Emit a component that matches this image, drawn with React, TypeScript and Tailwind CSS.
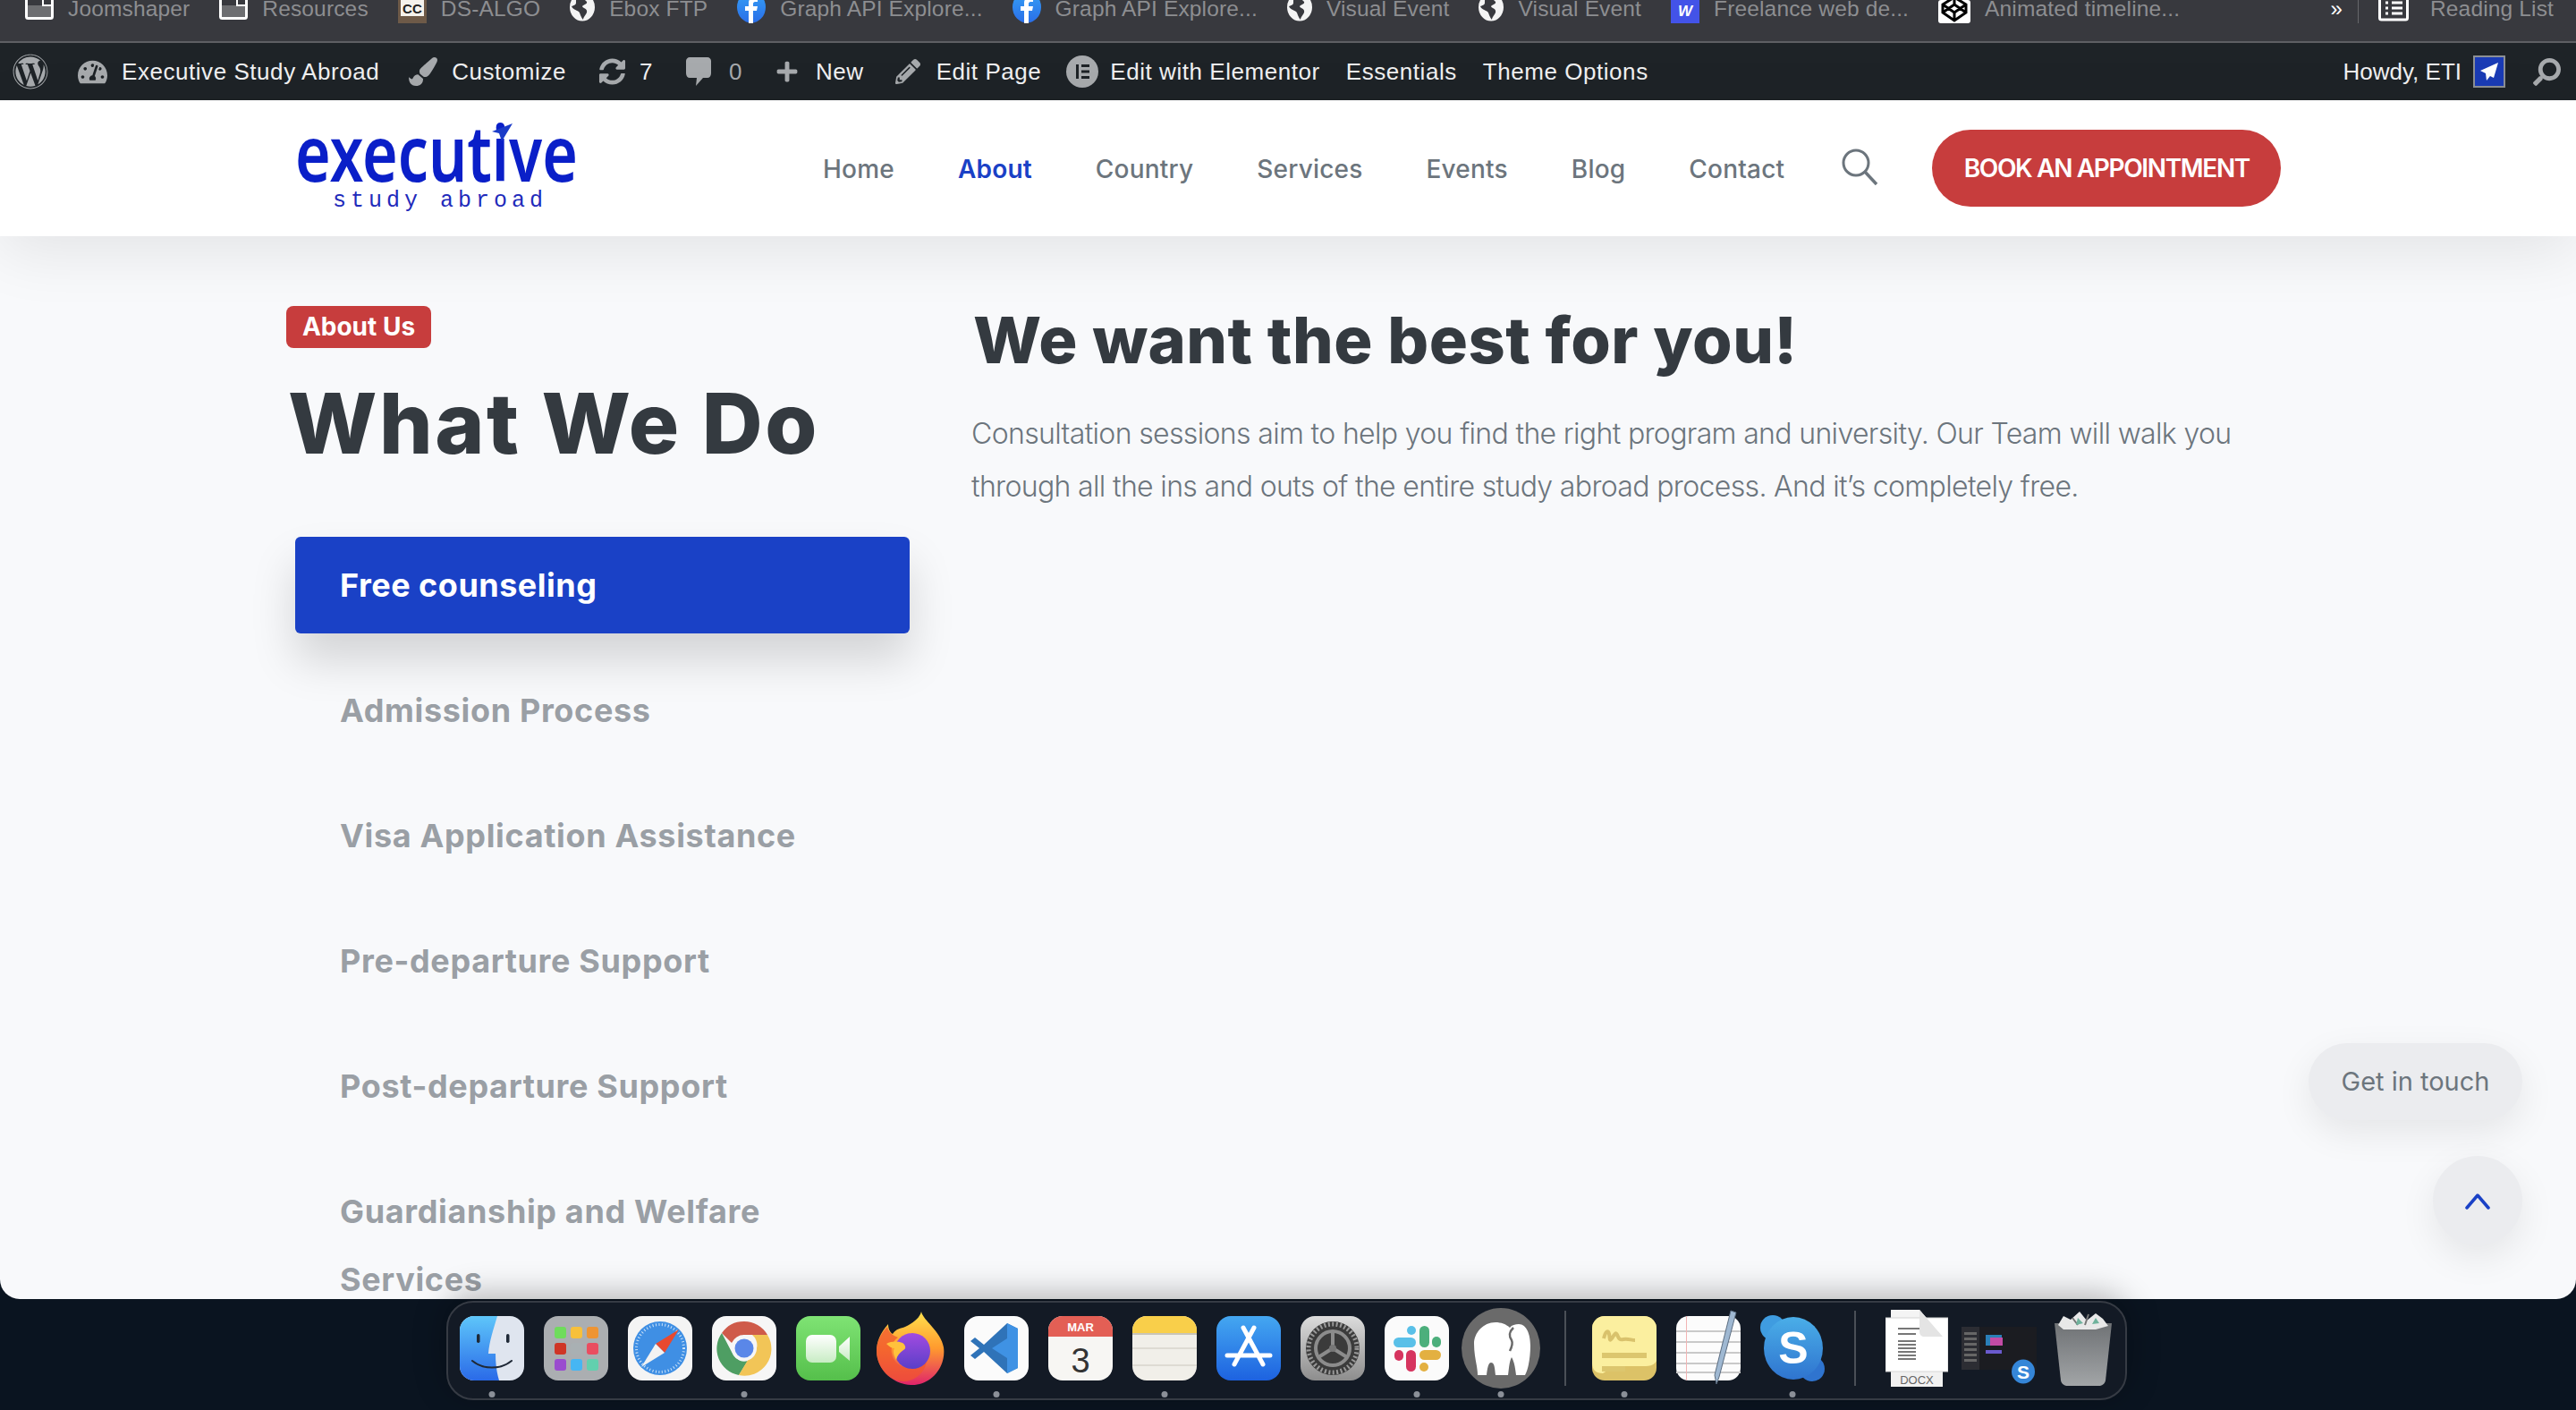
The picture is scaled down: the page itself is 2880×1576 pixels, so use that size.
import React from "react";
import { FaWordpress, FaSyncAlt, FaPlus, FaPencilAlt, FaTachometerAlt, FaSearch, FaPaintBrush } from "react-icons/fa";

const PageIcon = () => (
  <svg width="32" height="22" viewBox="0 0 32 22"><rect x="1.5" y="-10" width="29" height="30.5" rx="2" fill="#6d6e71" stroke="#fff" strokeWidth="3" /><rect x="3" y="0" width="26" height="6" fill="#38393e" /><path d="M20 0v6h10" fill="none" stroke="#fff" strokeWidth="2" /></svg>
);
const CcIcon = () => (
  <svg width="32" height="26" viewBox="0 0 32 26"><rect width="32" height="26" fill="#6e5a48" /><rect x="3" y="0" width="26" height="18" fill="#f5f2ec" /><text x="16" y="15" textAnchor="middle" fontSize="15" fontWeight="700" fontFamily="Liberation Sans" fill="#222">CC</text></svg>
);
const GlobeIcon = () => (
  <svg width="28" height="24" viewBox="0 0 28 24"><ellipse cx="14" cy="8" rx="14" ry="15.5" fill="#f4f4f4" /><path d="M8 -4c4 2 9 3 11 6 1 3-4 3-5 5 1 3 6 2 5 7-1 3-4 5-4 8-3-3-3-7-5-9-3-2-7-3-8-6 2-1 5-1 5-4 0-3 0-5 1-7z" fill="#38393e" /></svg>
);
const FbIcon = () => (
  <svg width="32" height="26" viewBox="0 0 32 26"><defs><linearGradient id="fbg" x1="0" y1="0" x2="0" y2="1"><stop offset="0" stopColor="#35a0f5" /><stop offset="1" stopColor="#2a6ee8" /></linearGradient></defs><ellipse cx="16" cy="8" rx="16" ry="17.5" fill="url(#fbg)" /><path d="M13 26V12H9V7h4V3c0-4 3-6 6-6h4v5h-3c-1 0-2 1-2 2v3h5l-1 5h-4v14z" fill="#fff" /></svg>
);
const WIcon = () => (
  <svg width="32" height="26" viewBox="0 0 32 26"><rect width="32" height="26" fill="#4353e8" /><text x="16" y="18" textAnchor="middle" fontSize="17" fontWeight="700" fontStyle="italic" fontFamily="Liberation Sans" fill="#fff">W</text></svg>
);
const PenIcon = () => (
  <svg width="36" height="26" viewBox="0 0 36 26"><rect width="36" height="26" rx="3" fill="#fff" /><path d="M18 -3 31 5v9l-13 9-13-9V5zM18 -3v8M18 14v9M5 5l13 9 13-9M5 14l13-9 13 9" fill="none" stroke="#000" strokeWidth="3" /></svg>
);
const ReadIcon = () => (
  <svg width="34" height="24" viewBox="0 0 34 24"><rect x="1.5" y="-8" width="31" height="30" rx="2" fill="none" stroke="#fff" strokeWidth="3" /><path d="M8 3h3M15 3h12M8 9h3M15 9h12M8 15h3M15 15h12" stroke="#fff" strokeWidth="3" /></svg>
);

const bookmarks: [React.ReactNode, string][] = [
  [<PageIcon />, "Joomshaper"],
  [<PageIcon />, "Resources"],
  [<CcIcon />, "DS-ALGO"],
  [<GlobeIcon />, "Ebox FTP"],
  [<FbIcon />, "Graph API Explore..."],
  [<FbIcon />, "Graph API Explore..."],
  [<GlobeIcon />, "Visual Event"],
  [<GlobeIcon />, "Visual Event"],
  [<WIcon />, "Freelance web de..."],
  [<PenIcon />, "Animated timeline..."],
];

const Tile = ({ children }: { children: React.ReactNode }) => (
  <svg width="72" height="72" viewBox="0 0 72 72" className="overflow-visible block shrink-0">{children}</svg>
);

const Finder = () => (
  <Tile>
    <defs><linearGradient id="fi" x1="0" y1="0" x2="0" y2="1"><stop offset="0" stopColor="#5ec6fa" /><stop offset="1" stopColor="#2a6ae8" /></linearGradient></defs>
    <rect width="72" height="72" rx="16" fill="#dfe5ef" />
    <path d="M16 0h26c-4 14-9 28-10 42h8c0 10 1 20 4 30H16A16 16 0 0 1 0 56V16A16 16 0 0 1 16 0z" fill="url(#fi)" />
    <rect x="19" y="20" width="3.5" height="10" rx="1.7" fill="#1f2937" />
    <rect x="52" y="20" width="3.5" height="10" rx="1.7" fill="#1f2937" />
    <path d="M14 50c12 10 32 10 44 0" fill="none" stroke="#1f2937" strokeWidth="2" strokeLinecap="round" />
  </Tile>
);
const Launch = () => {
  const cs = ["#6fdc5c", "#f7c03b", "#ee9433", "#cf3526", "#a9b0b3", "#ea4d60", "#9a4ccf", "#46b6f3", "#62d0ae"];
  return (
    <Tile>
      <rect width="72" height="72" rx="16" fill="#abaeb1" />
      {cs.map((c, i) => <rect key={i} x={12 + (i % 3) * 18} y={12 + Math.floor(i / 3) * 18} width="13" height="13" rx="3" fill={c} />)}
    </Tile>
  );
};
const Safari = () => (
  <Tile>
    <rect width="72" height="72" rx="16" fill="#f4f4f4" />
    <circle cx="36" cy="36" r="30" fill="#3f8fe4" />
    <circle cx="36" cy="36" r="26.5" fill="none" stroke="#cfe4f8" strokeWidth="3" strokeDasharray="1 2.5" />
    <path d="M57 15 31 31l10 10z" fill="#e8492f" />
    <path d="M15 57 41 41 31 31z" fill="#f2f2f2" />
  </Tile>
);
const Chrome = () => (
  <Tile>
    <rect width="72" height="72" rx="16" fill="#f6f6f6" />
    <path d="M36 6a30 30 0 0 1 26 15H36a15 15 0 0 0-14 9L11 19A30 30 0 0 1 36 6z" fill="#cf5b4a" />
    <path d="M11 19l13 25a14 14 0 0 0 16 6L30 66A30 30 0 0 1 11 19z" fill="#4e9e63" />
    <path d="M62 21a30 30 0 0 1-32 45l12-20a15 15 0 0 0 3-25z" fill="#f2c557" />
    <circle cx="36" cy="36" r="14" fill="#f6f6f6" />
    <circle cx="36" cy="36" r="10.5" fill="#5a87e8" />
  </Tile>
);
const FaceTime = () => (
  <Tile>
    <defs><linearGradient id="ft" x1="0" y1="0" x2="0" y2="1"><stop offset="0" stopColor="#7fe374" /><stop offset="1" stopColor="#55bf4b" /></linearGradient><linearGradient id="ft2" x1="0" y1="0" x2="0" y2="1"><stop offset="0" stopColor="#fff" /><stop offset="1" stopColor="#c8ecc4" /></linearGradient></defs>
    <rect width="72" height="72" rx="16" fill="url(#ft)" />
    <rect x="11" y="21" width="34" height="31" rx="7" fill="url(#ft2)" />
    <path d="M48 34 60 23v27L48 40z" fill="url(#ft2)" />
  </Tile>
);
const Firefox = () => (
  <svg width="80" height="82" viewBox="0 0 80 82" className="block shrink-0">
    <defs>
      <linearGradient id="ff" x1="0.5" y1="0" x2="0.5" y2="1"><stop offset="0" stopColor="#ffe14d" /><stop offset="0.5" stopColor="#ff9a2e" /><stop offset="1" stopColor="#e0246b" /></linearGradient>
      <linearGradient id="ffp" x1="0.5" y1="0" x2="0.5" y2="1"><stop offset="0" stopColor="#a24be0" /><stop offset="1" stopColor="#5a3fc8" /></linearGradient>
    </defs>
    <path d="M50 0c2 10 22 22 25 40 3 22-14 42-35 42C18 82 0 64 0 44 0 34 4 24 13 14c0 5 2 9 5 11 4-6 9-6 14-8 8-4 16-9 18-17z" fill="url(#ff)" />
    <path d="M0 44c0-10 5-20 12-27 2 8 8 10 12 12-10 6-10 24 2 31 10 6 26 2 30-12 2 18-12 30-26 30C14 78 0 62 0 44z" fill="#f0562f" opacity="0.75" />
    <circle cx="40" cy="44" r="20" fill="url(#ffp)" />
    <path d="M11 36c6-3 12-3 18-1 3 2 5 6 1 8-4 3-7 6-8 11-3-5-4-10-2-13-3 0-6-2-9-5z" fill="#ffc23c" />
  </svg>
);
const VSCode = () => (
  <Tile>
    <rect width="72" height="72" rx="16" fill="#fbfbfb" />
    <path d="M48 8 60 14v44L48 64 22 40 12 48 7 44 17 36 7 28l5-4 10 8z" fill="#2f73b8" />
    <path d="M48 8 60 14v44L48 64V47L31 36l17-11z" fill="#3f92e4" />
  </Tile>
);
const Calendar = () => (
  <Tile>
    <rect width="72" height="72" rx="16" fill="#f7f6f3" />
    <path d="M16 0h40a16 16 0 0 1 16 16v7H0v-7A16 16 0 0 1 16 0z" fill="#e35f55" />
    <text x="36" y="17" textAnchor="middle" fontSize="13" fontWeight="600" fontFamily="Liberation Sans" fill="#fff">MAR</text>
    <text x="36" y="63" textAnchor="middle" fontSize="38" fontFamily="Liberation Sans" fill="#333">3</text>
  </Tile>
);
const Notes = () => (
  <Tile>
    <rect width="72" height="72" rx="16" fill="#f1efe9" />
    <path d="M16 0h40a16 16 0 0 1 16 16v3H0v-3A16 16 0 0 1 16 0z" fill="#f9cf4a" />
    <rect y="19" width="72" height="2" fill="#c9c5b8" />
    <rect y="35" width="72" height="2" fill="#dedbd3" />
    <rect y="54" width="72" height="2" fill="#dedbd3" />
  </Tile>
);
const AppStore = () => (
  <Tile>
    <defs><linearGradient id="as" x1="0" y1="0" x2="0" y2="1"><stop offset="0" stopColor="#44a7f1" /><stop offset="1" stopColor="#1d62e0" /></linearGradient></defs>
    <rect width="72" height="72" rx="16" fill="url(#as)" />
    <path d="M42 13 20 54M30 13l22 41M12 44h48" stroke="#fff" strokeWidth="5" strokeLinecap="round" fill="none" />
  </Tile>
);
const Settings = () => (
  <Tile>
    <defs><linearGradient id="st" x1="0" y1="0" x2="0" y2="1"><stop offset="0" stopColor="#dcdcdc" /><stop offset="1" stopColor="#8d8d8d" /></linearGradient></defs>
    <rect width="72" height="72" rx="16" fill="url(#st)" />
    <circle cx="36" cy="36" r="30" fill="#3b3b3b" />
    <circle cx="36" cy="36" r="27" fill="none" stroke="#9a9a9a" strokeWidth="5" strokeDasharray="2 2.5" />
    <circle cx="36" cy="36" r="19" fill="none" stroke="#8c8c8c" strokeWidth="4" />
    <path d="M36 36V17M36 36 20 46M36 36l16 10" stroke="#8c8c8c" strokeWidth="4" />
    <circle cx="36" cy="36" r="4" fill="#777" />
  </Tile>
);
const Slack = () => (
  <Tile>
    <rect width="72" height="72" rx="16" fill="#fbfbfb" />
    <rect x="10" y="24" width="25" height="11" rx="5.5" fill="#59c0e8" />
    <rect x="25" y="11" width="10" height="10" rx="5" fill="#59c0e8" />
    <rect x="39" y="11" width="11" height="24" rx="5.5" fill="#4caf7c" />
    <rect x="53" y="23" width="10" height="12" rx="5" fill="#4caf7c" />
    <rect x="11" y="38" width="10" height="12" rx="5" fill="#d6345f" />
    <rect x="24" y="38" width="11" height="24" rx="5.5" fill="#d6345f" />
    <rect x="39" y="38" width="24" height="11" rx="5.5" fill="#e3b041" />
    <rect x="39" y="52" width="10" height="10" rx="5" fill="#e3b041" />
  </Tile>
);
const Mamp = () => (
  <svg width="88" height="90" viewBox="0 0 88 90" className="block shrink-0">
    <ellipse cx="44" cy="45" rx="44" ry="45" fill="#6a6a6a" />
    <path d="M14 40c0-12 10-24 24-24 6 0 12 2 16 6 2-3 6-4 10-4 9 0 13 12 13 24 0 12-2 26-6 33h-10c-1-8-2-15-5-20-3 6-3 14-4 20H38c-1-8-1-14-5-14-3 0-4 6-5 14H18c0-10-4-20-4-35z" fill="#fff" />
    <path d="M58 22c-4 4-6 8-2 14 2 4 0 8-2 12" fill="none" stroke="#6a6a6a" strokeWidth="2.5" />
  </svg>
);
const Stickies = () => (
  <Tile>
    <rect width="72" height="72" rx="14" fill="#dcc267" />
    <path d="M14 0h44a14 14 0 0 1 14 14v36c-2 4-6 6-12 6H30c-8 0-14 6-18 8-8 0-12-4-12-12V14A14 14 0 0 1 14 0z" fill="#fbef9f" />
    <path d="M13 25c2-8 5-10 6-5s0 9 3 5 4-8 6-4 2 6 7 5 9 1 13 1" fill="none" stroke="#d9c26c" strokeWidth="4" />
    <rect x="11" y="41" width="50" height="6" fill="#dcc66e" />
    <rect x="11" y="56" width="26" height="6" fill="#dcc66e" />
  </Tile>
);
const TextEdit = () => (
  <Tile>
    <rect width="72" height="72" rx="14" fill="#fcfcfc" />
    {[16, 28, 40, 52, 62].map((y) => <rect key={y} y={y} width="72" height="2" fill="#c9c9c9" />)}
    <rect x="11" width="1" height="72" fill="#f2b5b5" />
    <path d="M61 -6 67 -4 48 68 45 76 43 66z" fill="#9fb8d2" stroke="#5c6d80" strokeWidth="1" />
  </Tile>
);
const Skype = () => (
  <svg width="72" height="74" viewBox="0 0 72 74" className="block shrink-0">
    <defs><linearGradient id="sk" x1="0" y1="0" x2="0" y2="1"><stop offset="0" stopColor="#4aaee8" /><stop offset="1" stopColor="#2f74cf" /></linearGradient></defs>
    <ellipse cx="14" cy="14" rx="14" ry="14" fill="#3f9ce0" />
    <ellipse cx="58" cy="60" rx="14" ry="14" fill="#2f74cf" />
    <ellipse cx="37" cy="37" rx="33" ry="35" fill="url(#sk)" />
    <text x="37" y="54" textAnchor="middle" fontSize="50" fontWeight="700" fontFamily="Liberation Sans" fill="#fff">S</text>
  </svg>
);
const Docx = () => (
  <svg width="70" height="86" viewBox="0 0 70 86" className="block shrink-0">
    <path d="M6 0h32l26 30v56H6z" fill="#f4f4f4" />
    <rect y="9" width="70" height="60" fill="#fff" stroke="#d4d4d4" />
    {[20, 26, 34, 38, 42, 46, 50, 54].map((y) => <rect key={y} x="14" y={y} width={y % 4 ? 20 : 40} height="2" fill="#777" />)}
    <path d="M38 0l26 30H44c-4 0-6-2-6-6z" fill="#e4e4e4" />
    <rect x="6" y="70" width="58" height="16" fill="#f1f1f1" />
    <text x="35" y="83" textAnchor="middle" fontSize="13" fontFamily="Liberation Sans" fill="#666">DOCX</text>
  </svg>
);
const Shot = () => (
  <svg width="86" height="64" viewBox="0 0 86 64" className="block overflow-visible shrink-0">
    <rect width="84" height="48" fill="#1b1c21" />
    <rect width="20" height="48" fill="#2c2d33" />
    {[6, 12, 18, 24, 30, 36].map((y) => <rect key={y} x="3" y={y} width="14" height="3" fill="#666" />)}
    <rect x="27" y="9" width="18" height="12" fill="#2a7fb8" />
    <rect x="32" y="12" width="14" height="9" fill="#c34ba5" />
    <rect x="27" y="26" width="18" height="4" fill="#6a5acd" />
    <ellipse cx="69" cy="50" rx="13" ry="13.5" fill="#3586d8" />
    <text x="69" y="58" textAnchor="middle" fontSize="21" fontWeight="700" fontFamily="Liberation Sans" fill="#fff">S</text>
  </svg>
);
const Trash = () => (
  <svg width="64" height="84" viewBox="0 0 64 84" className="block shrink-0">
    <defs><linearGradient id="tr" x1="0" y1="0" x2="0" y2="1"><stop offset="0" stopColor="#6f7275" /><stop offset="1" stopColor="#a2a5a7" /></linearGradient></defs>
    <path d="M0 14h64l-7 64c-1 4-4 6-8 6H15c-4 0-7-2-8-6z" fill="url(#tr)" />
    <path d="M4 16 10 6l8 4 10-9 8 10 10-8 8 6 6 8-14 4H10z" fill="#e8e8e8" />
    <path d="M20 8l6 8M38 4l-4 12" stroke="#777" strokeWidth="2" />
    <path d="M26 8l6 6-8 2zM46 8l4 6-8 1z" fill="#6fb29c" />
  </svg>
);

const Slot = ({ children, dot, w = 72 }: { children: React.ReactNode; dot?: boolean; w?: number }) => (
  <div className="relative h-full flex items-center justify-center" style={{ width: w }}>
    {children}
    {dot && <span className="absolute left-1/2 -translate-x-1/2 bottom-[-19px] w-[7px] h-[7px] rounded-full bg-[#8b9098]" />}
  </div>
);

const Dock = () => (
  <div className="relative z-20 mt-[2px] ml-[499px] w-[1879px] h-[111px] rounded-[30px] border-2 border-[#363b44] bg-[#131a25] shadow-[0_-6px_36px_rgba(0,0,0,0.3)] flex items-center pl-[13px]">
    <div className="flex items-center h-[72px] -mt-[5px] gap-[22px]">
      <Slot dot><Finder /></Slot>
      <Slot><Launch /></Slot>
      <Slot><Safari /></Slot>
      <Slot dot><Chrome /></Slot>
      <Slot><FaceTime /></Slot>
      <Slot><Firefox /></Slot>
      <Slot dot><VSCode /></Slot>
      <Slot><Calendar /></Slot>
      <Slot dot><Notes /></Slot>
      <Slot><AppStore /></Slot>
      <Slot><Settings /></Slot>
      <Slot dot><Slack /></Slot>
      <Slot dot><Mamp /></Slot>
      <div className="w-[2px] h-[84px] bg-[#4a4f57] ml-[13px] mr-[7px]" />
      <Slot dot><Stickies /></Slot>
      <Slot><TextEdit /></Slot>
      <Slot dot><Skype /></Slot>
      <div className="w-[2px] h-[84px] bg-[#4a4f57] ml-[11px] mr-[10px]" />
      <Slot><Docx /></Slot>
      <div className="-ml-[8px] mt-[16px] h-full"><Slot w={86}><Shot /></Slot></div>
      <div className="-ml-[4px] h-full"><Slot w={64}><Trash /></Slot></div>
    </div>
  </div>
);

const menu = ["Admission Process", "Visa Application Assistance", "Pre-departure Support", "Post-departure Support"];
const nav = ["Home", "About", "Country", "Services", "Events", "Blog", "Contact"];

export default function App() {
  return (
    <div className="w-[2880px] h-[1576px] overflow-hidden bg-[#0a1420] flex flex-col font-['Inter',sans-serif]">
      <div className="relative h-[1452px] shrink-0 overflow-hidden rounded-b-[22px] bg-[#f8f9fb] flex flex-col">
        {/* Browser bookmarks */}
        <div className="h-[48px] shrink-0 bg-[#38393e] border-b-2 border-[#5e5f63] flex items-start pl-[28px] pr-[25px] font-['Liberation_Sans',sans-serif] text-[24.5px] tracking-[0.15px] leading-[20px] text-[#8d8e91] overflow-hidden">
          <div className="flex gap-[33px]">
            {bookmarks.map(([icon, label], i) => (
              <div key={i} className="flex items-start gap-[16px] whitespace-nowrap">
                {icon}
                <span>{label}</span>
              </div>
            ))}
          </div>
          <div className="ml-auto flex items-start">
            <span className="text-white text-[24px] mr-[17px]">»</span>
            <div className="w-[1px] h-[26px] bg-[#66676b] mr-[22px]" />
            <ReadIcon />
            <span className="ml-[24px]">Reading List</span>
          </div>
        </div>
        {/* WP admin bar */}
        <div className="h-[64px] shrink-0 bg-[#1e2327] flex items-center pl-[14px] pr-[17px] font-['Liberation_Sans',sans-serif] text-[26px] tracking-[0.55px] text-[#f0f0f1] whitespace-nowrap">
          <FaWordpress className="text-[#a7aaad] w-[40px] h-[40px]" />
          <FaTachometerAlt className="text-[#a7aaad] w-[33px] h-[33px] ml-[33px]" />
          <span className="ml-[16px]">Executive Study Abroad</span>
          <FaPaintBrush className="text-[#a7aaad] w-[32px] h-[32px] ml-[33px]" />
          <span className="ml-[16px]">Customize</span>
          <FaSyncAlt className="text-[#a7aaad] w-[33px] h-[30px] ml-[35px]" />
          <span className="ml-[14px]">7</span>
          <svg width="28" height="32" viewBox="0 0 28 32" className="ml-[37px]"><path d="M4 0h20c2 0 4 2 4 4v14c0 3-2 5-4 5h-5l-8 9 1-9H4c-2 0-4-2-4-5V4c0-2 2-4 4-4z" fill="#a7aaad" /></svg>
          <span className="ml-[20px] text-[#a7aaad]">0</span>
          <FaPlus className="text-[#a7aaad] w-[26px] h-[26px] ml-[37px]" />
          <span className="ml-[19px]">New</span>
          <FaPencilAlt className="text-[#a7aaad] w-[28px] h-[28px] ml-[35px]" />
          <span className="ml-[18px]">Edit Page</span>
          <svg width="36" height="36" viewBox="0 0 36 36" className="ml-[28px]"><circle cx="18" cy="18" r="18" fill="#a7aaad" /><path d="M11 10h3v16h-3zM17 10h9v3h-9zM17 16.5h9v3h-9zM17 23h9v3h-9z" fill="#1e2327" /></svg>
          <span className="ml-[13px]">Edit with Elementor</span>
          <span className="ml-[29px]">Essentials</span>
          <span className="ml-[29px]">Theme Options</span>
          <span className="ml-auto tracking-normal">Howdy, ETI</span>
          <div className="ml-[13px] w-[36px] h-[36px] border-2 border-[#8c8f94] bg-[#1a3bb5] flex items-center justify-center">
            <svg width="22" height="22" viewBox="0 0 22 22"><path d="M21 1 1 10l6 3 1 8 4-5 4 2z" fill="#fff" /></svg>
          </div>
          <FaSearch className="text-[#a7aaad] w-[31px] h-[31px] ml-[31px] -scale-x-100" />
        </div>
        {/* Site header */}
        <header className="relative z-10 h-[152px] shrink-0 bg-white shadow-[0_16px_70px_rgba(0,0,0,0.09)] flex items-center pl-[330px]">
          <div className="w-[320px] shrink-0 relative h-[100px]">
            <div className="text-[86px] leading-[66px] font-semibold text-[#0a1fc8] font-['Noto_Sans',sans-serif] origin-top-left scale-x-[0.79] -mt-[1px] whitespace-nowrap">executive</div>
            <svg width="24" height="20" viewBox="0 0 24 20" className="absolute left-[220px] top-[0px]"><path d="M23 0 0 9l8 2 3 9z" fill="#1a3bc8" /></svg>
            <div className="absolute left-[42px] top-[72px] text-[25px] leading-[30px] tracking-[5px] text-[#1f2bbb] font-['Liberation_Mono',monospace] whitespace-nowrap">study abroad</div>
          </div>
          <nav className="flex gap-[71px] ml-[270px] mt-[2px] text-[28px] font-medium tracking-[0.2px] text-[#6c757d]">
            {nav.map((n) => (
              <span key={n} className={n === "About" ? "text-[#1a41c6] font-semibold" : ""}>{n}</span>
            ))}
          </nav>
          <svg width="42" height="42" viewBox="0 0 42 42" className="ml-[63px] -mt-[4px]" fill="none" stroke="#6c757d"><circle cx="17" cy="17" r="14" strokeWidth="3" /><path d="M27 27l13 14" strokeWidth="3.5" /></svg>
          <div className="ml-[60px] w-[390px] h-[86px] rounded-full bg-[#c73d3d] text-white text-[28px] font-semibold flex items-center justify-center tracking-[-1.35px]">BOOK AN APPOINTMENT</div>
        </header>
        {/* Body */}
        <main className="flex-1 min-h-0 overflow-hidden flex pl-[320px] pt-[78px]">
          <div className="w-[766px] shrink-0">
            <span className="inline-block h-[47px] w-[162px] rounded-[8px] bg-[#c73d3d] text-white text-[28px] font-bold leading-[47px] text-center">About Us</span>
            <h1 className="mt-[34px] ml-[2px] text-[94px] leading-[100px] font-extrabold text-[#343a40] tracking-[2.5px]">What We Do</h1>
            <ul className="mt-[77px] ml-[10px] w-[687px]">
              <li className="h-[108px] mb-[32px] rounded-[6px] bg-[#1a41c6] pl-[50px] flex items-center text-white text-[36px] font-bold tracking-[0.5px] shadow-[0_30px_50px_rgba(0,0,0,0.15)]">Free counseling</li>
              {menu.map((m) => (
                <li key={m} className="h-[108px] mb-[32px] pl-[50px] flex items-center text-[#9a9fa5] text-[36px] font-bold tracking-[0.65px]">{m}</li>
              ))}
              <li className="py-[16px] pl-[50px] text-[#9a9fa5] text-[36px] leading-[76px] font-bold tracking-[0.65px]">Guardianship and Welfare<br />Services</li>
            </ul>
          </div>
          <div className="-mt-[2px]">
            <h2 className="ml-[2px] text-[72px] leading-[80px] font-extrabold tracking-[0.5px] text-[#343a40]">We want the best for you!</h2>
            <p className="mt-[35px] text-[32px] leading-[59px] font-light text-[#6c757d] tracking-[-0.65px] whitespace-nowrap">
              Consultation sessions aim to help you find the right program and university. Our Team will walk you<br />
              through all the ins and outs of the entire study abroad process. And it’s completely free.
            </p>
          </div>
        </main>
        {/* Floating buttons */}
        <div className="absolute right-[60px] top-[1166px] flex flex-col items-end gap-[40px]">
          <div className="w-[239px] h-[86px] rounded-full bg-[#ebecef] text-[#6c757d] text-[29px] flex items-center justify-center shadow-[0_14px_40px_rgba(0,0,0,0.08)]">Get in touch</div>
          <div className="w-[100px] h-[100px] rounded-full bg-[#ebecef] flex items-center justify-center shadow-[0_14px_40px_rgba(0,0,0,0.08)]">
            <svg width="28" height="19" viewBox="0 0 28 19" fill="none" stroke="#1a41c6" strokeWidth="3.5" strokeLinecap="round" strokeLinejoin="round"><path d="M2 17 14 3l12 14" /></svg>
          </div>
        </div>
      </div>
      <Dock />
    </div>
  );
}
